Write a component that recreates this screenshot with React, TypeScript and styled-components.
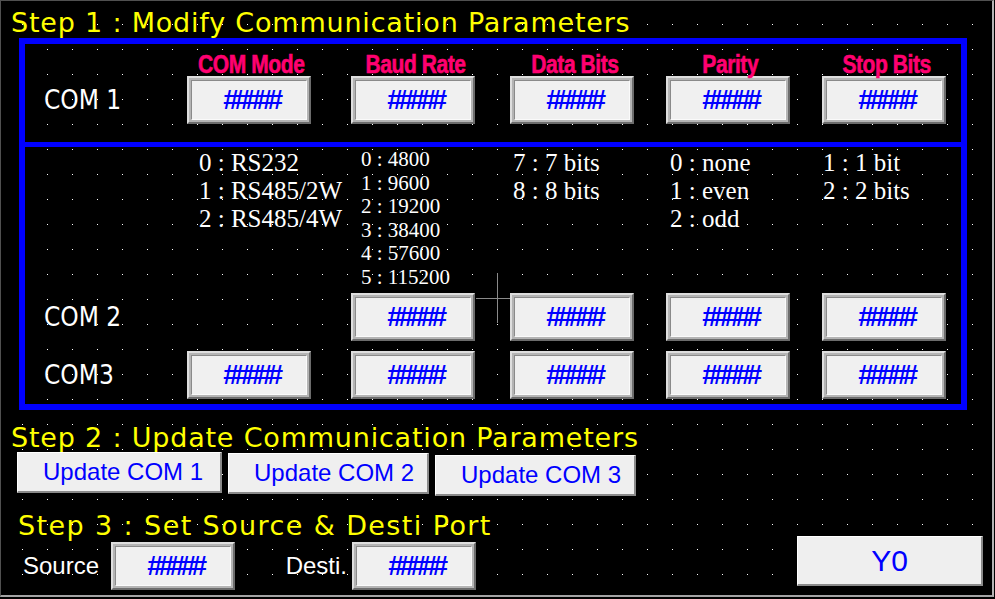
import styled, { createGlobalStyle } from "styled-components";

const GlobalStyle = createGlobalStyle`
  html, body {
    margin: 0;
    padding: 0;
    background: #000;
  }
  body {
    width: 995px;
    height: 599px;
    overflow: hidden;
  }
`;

// column starts inside the blue panel: label, mode, baud, data, parity, stop
const COLS = "162px 164px 159px 156px 156px 1fr";

const Screen = styled.div`
  box-sizing: border-box;
  width: 994px;
  height: 597px;
  border-top: 1px solid #505050;
  border-left: 1px solid #505050;
  border-right: 2px solid #b4b4b4;
  border-bottom: 2px solid #a4a4a4;
  background-color: #000;
  background-image: linear-gradient(90deg, #000 24px, transparent 24px),
    linear-gradient(#000 24px, #fff 24px);
  background-size: 25px 25px;
  background-position: -3px -1px;
  display: flex;
  flex-direction: column;
  font-family: "Liberation Sans", Arial, sans-serif;
`;

const StepTitle = styled.h2<{ $left: number; $top: number; $spacing: number }>`
  margin: ${(p) => p.$top}px 0 0 ${(p) => p.$left}px;
  font: 400 27px/31px "DejaVu Sans", "Comic Sans MS", sans-serif;
  letter-spacing: ${(p) => p.$spacing}px;
  color: #ffff00;
  white-space: nowrap;
`;

const Panel = styled.div`
  box-sizing: border-box;
  width: 948px;
  height: 372px;
  margin-left: 18px;
  border: 6px solid #0000ff;
  display: flex;
  flex-direction: column;
`;

const TopSection = styled.div`
  box-sizing: border-box;
  height: 98px;
  padding-top: 8px;
  display: grid;
  grid-template-columns: ${COLS};
  grid-template-rows: 24px 48px;
`;

const Divider = styled.div`
  height: 5px;
  background: #0000ff;
`;

const BottomSection = styled.div`
  position: relative;
  flex: 1;
  display: grid;
  grid-template-columns: ${COLS};
  grid-template-rows: 146px 58px 48px;
`;

const Header = styled.div`
  width: 124px;
  padding-left: 5px;
  box-sizing: border-box;
  display: flex;
  justify-content: center;
  white-space: nowrap;
`;

const HeaderText = styled.span`
  display: inline-block;
  transform: scaleX(0.84);
  color: #ff0070;
  font: 700 25px/24px "Liberation Sans", Arial, sans-serif;
  letter-spacing: -0.5px;
  -webkit-text-stroke: 0.6px #ff0070;
`;

const RowLabel = styled.div`
  align-self: start;
  height: 48px;
  display: flex;
  align-items: center;
  padding-left: 19px;
  color: #fff;
  font: 400 26px "DejaVu Sans Condensed", "DejaVu Sans", sans-serif;
  white-space: nowrap;
`;

const Field = styled.div`
  box-sizing: border-box;
  width: 124px;
  height: 48px;
  align-self: start;
  padding: 2px;
  border: 2px solid;
  border-color: #dedede #6c6c6c #6c6c6c #dedede;
  background: #b4b4b4;
  display: flex;
`;

const FieldFace = styled.div`
  flex: 1;
  border: 1px solid;
  border-color: #8a8a8a #fafafa #fafafa #8a8a8a;
  background: #f0f0f0;
  display: flex;
  align-items: center;
  justify-content: center;
  padding-left: 4px;
  color: #0000ff;
  font: 700 28px/1 "Liberation Sans", Arial, sans-serif;
  letter-spacing: -4.5px;
`;

const Desc = styled.div<{ $pad: number; $small?: boolean }>`
  padding: ${(p) => (p.$small ? 1 : 2)}px 0 0 ${(p) => p.$pad}px;
  color: #fff;
  font-family: "Liberation Serif", "Times New Roman", serif;
  font-size: ${(p) => (p.$small ? 21 : 25)}px;
  line-height: ${(p) => (p.$small ? 23.5 : 28)}px;
  white-space: nowrap;
`;

const CrossV = styled.div`
  position: absolute;
  left: 472px;
  top: 126px;
  width: 1px;
  height: 50px;
  background: #8a8a8a;
`;

const CrossH = styled.div`
  position: absolute;
  left: 451px;
  top: 151px;
  width: 34px;
  height: 1px;
  background: #8a8a8a;
`;

const Lower = styled.div`
  flex: 1;
  display: flex;
`;

const LowerMain = styled.div`
  display: flex;
  flex-direction: column;
`;

const ButtonRow = styled.div`
  display: flex;
  align-items: flex-start;
  gap: 6px;
  margin: -1px 0 0 16px;
`;

const FlatButton = styled.div`
  box-sizing: border-box;
  display: flex;
  align-items: center;
  background: #efefef;
  border-top: 1px solid #fff;
  border-left: 1px solid #fff;
  border-right: 2px solid #8a8a8a;
  border-bottom: 2px solid #8a8a8a;
  color: #0000ff;
  white-space: nowrap;
`;

const UpdateButton = styled(FlatButton)<{ $width: number; $shift: number }>`
  width: ${(p) => p.$width}px;
  height: 41px;
  margin-top: ${(p) => p.$shift}px;
  padding-left: 25px;
  font-size: 24px;
`;

const SourceRow = styled.div`
  display: flex;
  align-items: center;
  margin: 1px 0 0 0;
`;

const PortLabel = styled.div<{ $width: number; $right?: boolean }>`
  box-sizing: border-box;
  width: ${(p) => p.$width}px;
  padding: ${(p) => (p.$right ? "0 5px 0 0" : "0 0 0 22px")};
  text-align: ${(p) => (p.$right ? "right" : "left")};
  color: #fff;
  font-size: 24px;
  white-space: nowrap;
`;

const OutputButton = styled(FlatButton)`
  width: 186px;
  height: 50px;
  margin: auto 9px 9px auto;
  justify-content: center;
  font-size: 30px;
`;

const HASH = "#####";

function Display() {
  return (
    <Field>
      <FieldFace>{HASH}</FieldFace>
    </Field>
  );
}

const headers = ["COM Mode", "Baud Rate", "Data Bits", "Parity", "Stop Bits"];

export default function App() {
  return (
    <>
      <GlobalStyle />
      <Screen>
        <StepTitle $left={10} $top={6} $spacing={0.8}>
          Step 1 : Modify Communication Parameters
        </StepTitle>
        <Panel>
          <TopSection>
            <div />
            {headers.map((h) => (
              <Header key={h}>
                <HeaderText>{h}</HeaderText>
              </Header>
            ))}
            <RowLabel>COM 1</RowLabel>
            {headers.map((h) => (
              <Display key={h} />
            ))}
          </TopSection>
          <Divider />
          <BottomSection>
            <div />
            <Desc $pad={12}>
              0 : RS232
              <br />1 : RS485/2W
              <br />2 : RS485/4W
            </Desc>
            <Desc $pad={10} $small>
              0 : 4800
              <br />1 : 9600
              <br />2 : 19200
              <br />3 : 38400
              <br />4 : 57600
              <br />5 : 115200
            </Desc>
            <Desc $pad={3}>
              7 : 7 bits
              <br />8 : 8 bits
            </Desc>
            <Desc $pad={4}>
              0 : none
              <br />1 : even
              <br />2 : odd
            </Desc>
            <Desc $pad={1}>
              1 : 1 bit
              <br />2 : 2 bits
            </Desc>

            <RowLabel>COM 2</RowLabel>
            <div />
            <Display />
            <Display />
            <Display />
            <Display />

            <RowLabel>COM3</RowLabel>
            <Display />
            <Display />
            <Display />
            <Display />
            <Display />

            <CrossV />
            <CrossH />
          </BottomSection>
        </Panel>
        <Lower>
          <LowerMain>
            <StepTitle $left={10} $top={12} $spacing={0.8}>
              Step 2 : Update Communication Parameters
            </StepTitle>
            <ButtonRow>
              <UpdateButton $width={205} $shift={0}>
                Update COM 1
              </UpdateButton>
              <UpdateButton $width={201} $shift={1}>
                Update COM 2
              </UpdateButton>
              <UpdateButton $width={201} $shift={3}>
                Update COM 3
              </UpdateButton>
            </ButtonRow>
            <StepTitle $left={17} $top={14} $spacing={1.4}>
              Step 3 : Set Source &amp; Desti Port
            </StepTitle>
            <SourceRow>
              <PortLabel $width={110}>Source</PortLabel>
              <Display />
              <PortLabel $width={117} $right>
                Desti.
              </PortLabel>
              <Display />
            </SourceRow>
          </LowerMain>
          <OutputButton>Y0</OutputButton>
        </Lower>
      </Screen>
    </>
  );
}
